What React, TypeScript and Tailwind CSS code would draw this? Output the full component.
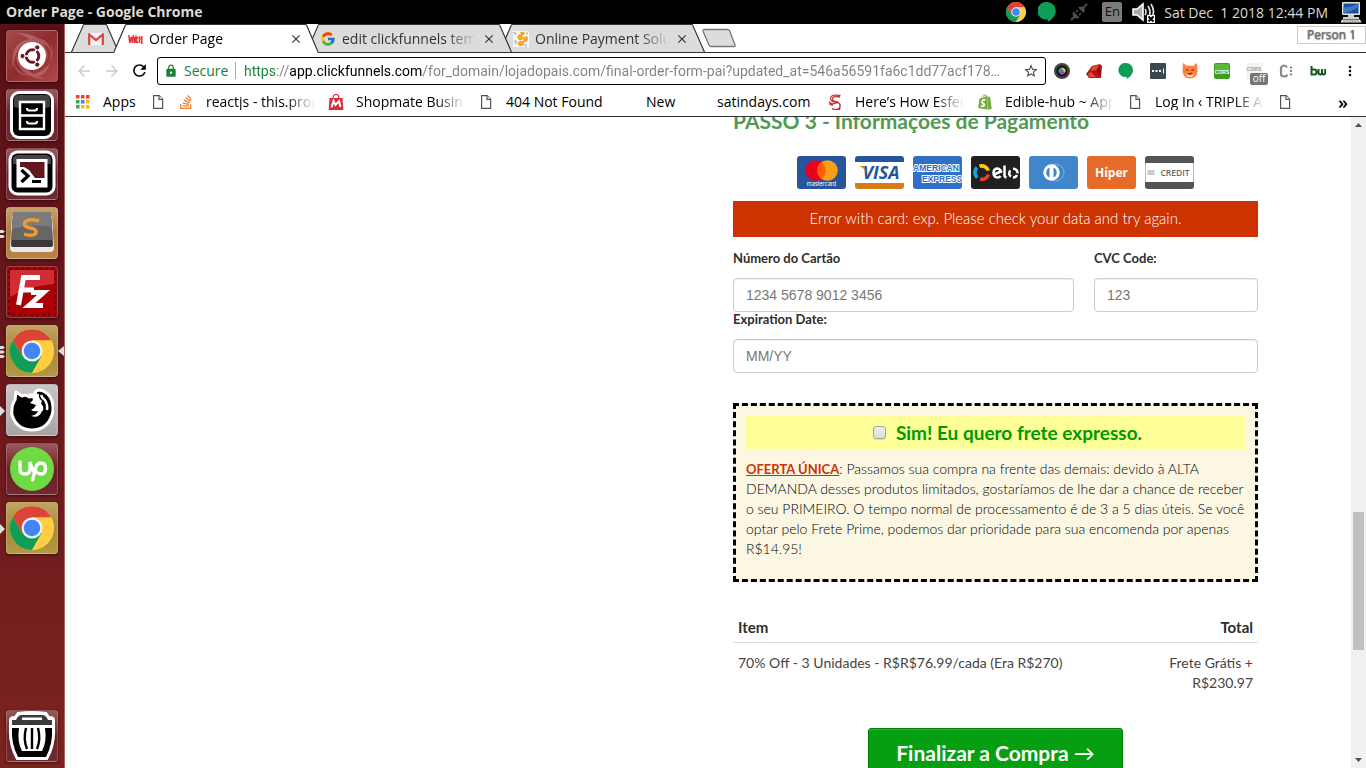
import React from "react";
import { FaStackOverflow, FaShopify } from "react-icons/fa";
import { FcGoogle } from "react-icons/fc";
import {
  MdArrowBack,
  MdArrowForward,
  MdRefresh,
  MdLock,
  MdStarBorder,
  MdMoreVert,
  MdClose,
} from "react-icons/md";

const UI = "font-['Open_Sans','Noto_Sans',sans-serif]";

function ChromeLogo({ className }: { className: string }) {
  return (
    <svg viewBox="0 0 48 48" className={className} aria-hidden="true">
      <circle cx="24" cy="24" r="24" fill="#ffcd40" />
      <path d="M3.2 12A24 24 0 0 0 24 48L34.4 30L24 24L13.6 30Z" fill="#0f9d58" />
      <path d="M3.2 12A24 24 0 0 1 44.8 12.5H24L13.6 30Z" fill="#db4437" />
      <path d="M24 12.5H44.8A24 24 0 0 1 24 48L34.4 30Z" fill="#ffcd40" />
      <circle cx="24" cy="24" r="11.4" fill="#f1f1f1" />
      <circle cx="24" cy="24" r="9" fill="#4285f4" />
    </svg>
  );
}

function Hangouts({ className }: { className: string }) {
  return (
    <svg viewBox="0 0 18 20" className={className} aria-hidden="true">
      <path d="M9 0a8.8 8.8 0 0 1 8.8 8.8c0 5-4 9-8 11.2v-2.6A8.8 8.8 0 1 1 9 0z" fill="#0f9d58" />
    </svg>
  );
}

function Doc() {
  return (
    <svg viewBox="0 0 12 16" className="h-4 w-3" fill="#fff" stroke="#555" strokeWidth="1.2" aria-hidden="true">
      <path d="M1.6 1.6h5.6l3.4 3.6v9.2h-9z" />
      <path d="M7 1.6v3.8h3.6" />
    </svg>
  );
}

/* ---------- system bar ---------- */

function SystemBar() {
  return (
    <header className="flex h-6 shrink-0 items-center bg-black pl-1.5 pr-1 text-[#dfdbd2]">
      <h1 className="text-[14px] leading-6 font-bold">Order Page - Google Chrome</h1>
      <div className="ml-auto flex items-center text-[14px]">
        <ChromeLogo className="mr-3 size-5" />
        <Hangouts className="mr-3.5 h-5 w-[18px]" />
        <svg viewBox="0 0 18 18" className="mr-3.5 size-[18px]" aria-hidden="true">
          <path d="M1 17l4.500-4.500M13 5l4-4" stroke="#4d4d4d" strokeWidth="1.800" />
          <path d="M3.500 8.500l6 6q-3 2-5.500-.5t-.5-5.500zM8 4.500l5.500 5.500q2.500-2.500.5-5T8 4.500z" fill="#4d4d4d" />
          <path d="M6 9l2-2M9 12l2-2" stroke="#4d4d4d" strokeWidth="1.400" />
        </svg>
        <span className="mr-2.5 flex h-5 w-5 items-center justify-center rounded-xs bg-[#7b7b7b] text-[13px] text-[#111]">En</span>
        <svg viewBox="0 0 24 22" className="mr-2 h-[22px] w-6" aria-hidden="true">
          <path d="M1 8h4l6-5v16l-6-5H1z" fill="#aaa" stroke="#fff" strokeWidth="1.6" />
          <path d="M13 8q2 3 0 6M16 5q4 6 0 12M19 3q5 8 0 15" fill="none" stroke="#ddd" strokeWidth="1.7" />
          <path d="M15 14h8v8h-8z" fill="#fff" />
          <path d="M16.500 15.500l5 5M21.500 15.500l-5 5" stroke="#000" strokeWidth="2" />
        </svg>
        <time className="mr-3 text-[14px] whitespace-pre">Sat Dec  1 2018 12:44 PM</time>
        <svg viewBox="0 0 22 22" className="h-[22px] w-[22px]" aria-hidden="true">
          <rect x="2" y="1" width="18" height="13" rx="1" fill="#e8e6df" />
          <rect x="3.500" y="2.500" width="15" height="10" fill="#1b4f9c" />
          <path d="M3.500 12.500V6q7 1 15-3.500v3q-6 5-15 7z" fill="#3c7bc8" />
          <path d="M8 14h6v2H8zM3 16h16v2H3z" fill="#cfcdc6" />
          <path d="M2 18.500h18l1.500 3H.5z" fill="#e4e2da" />
          <path d="M3 20h16" stroke="#999" />
        </svg>
      </div>
    </header>
  );
}

/* ---------- launcher ---------- */

type TileProps = { label: string; tone: string; children: React.ReactNode; left?: "one" | "two" | "three"; active?: boolean };

function Tile({ label, tone, children, left, active }: TileProps) {
  return (
    <button
      type="button"
      aria-label={label}
      className={`relative flex size-[52px] items-center justify-center rounded-[4px] border border-white/20 shadow-[0_1px_3px_rgba(0,0,0,0.5)] ${tone}`}
    >
      {children}
      {left && (
        <svg viewBox="0 0 5 12" className="absolute top-5 -left-[7px] h-3 w-[5px]" fill="#ddd" aria-hidden="true">
          {left === "one" && <path d="M0 1l5 5-5 5z" />}
          {left === "two" && <path d="M0 2h3l2 1.500-2 1.500H0zM0 7h3l2 1.500L3 10H0z" />}
          {left === "three" && <path d="M0 0h3l2 1.500L3 3H0zM0 4.500h3L5 6 3 7.500H0zM0 9h3l2 1.500L3 12H0z" />}
        </svg>
      )}
      {active && (
        <svg viewBox="0 0 6 10" className="absolute top-5 -right-[7px] h-2.5 w-1.5" fill="#ddd" aria-hidden="true">
          <path d="M6 0v10L0 5z" />
        </svg>
      )}
    </button>
  );
}

function Launcher() {
  const maroon = "bg-linear-to-b from-[#96585c] via-[#701f26] to-[#702830]";
  const gold = "bg-linear-to-b from-[#bda565] via-[#a98a35] to-[#b39845]";
  return (
    <nav
      aria-label="Launcher"
      className="flex w-[65px] shrink-0 flex-col items-center gap-[7px] border-r border-[#a86462] bg-linear-to-b from-[#581116] via-[#6b181c] to-[#7b241f] py-1.5 pr-px"
    >
      <Tile label="Search" tone="bg-linear-to-br from-[#a34a4c] via-[#8f2a2e] to-[#b04a48]">
        <svg viewBox="0 0 50 50" className="absolute inset-0 size-full" aria-hidden="true">
          <g fill="#fff" opacity=".2">
            <path d="M6 38Q2 12 22 8T44 22Q40 10 24 11T6 38z" />
            <path d="M44 12Q50 34 30 42T6 30Q10 44 28 45T44 12z" />
            <path d="M10 2Q40 2 41 28Q32 10 10 2z" />
            <path d="M38 48Q10 46 9 24Q18 42 38 48z" />
          </g>
        </svg>
        <svg viewBox="0 0 28 28" className="relative size-7" aria-hidden="true">
          <circle cx="14" cy="14" r="14" fill="#fff" />
          <circle cx="14.500" cy="14" r="6.300" fill="none" stroke="#6a1a20" strokeWidth="3" />
          <path d="M14.500 14L3 14M14.500 14L20.500 4M14.500 14L20.500 24" stroke="#fff" strokeWidth="1.600" />
          <g fill="#6a1a20" stroke="#fff" strokeWidth="1">
            <circle cx="4.500" cy="14" r="2.600" />
            <circle cx="19.300" cy="5.400" r="2.600" />
            <circle cx="19.300" cy="22.600" r="2.600" />
          </g>
          <circle cx="14.500" cy="14" r="4.600" fill="#fff" />
        </svg>
      </Tile>
      <Tile label="Files" tone={maroon}>
        <svg viewBox="0 0 46 50" className="h-[50px] w-[46px]" aria-hidden="true">
          <rect x="1" y="1" width="44" height="48" rx="9" fill="#fff" />
          <rect x="4" y="4" width="38" height="42" rx="6" fill="#000" />
          <path d="M5 9a5 5 0 0 1 5-4h26a5 5 0 0 1 5 4v8q-18 5-36 0z" fill="#444" />
          <path d="M11 12h24v27H11zM11 25.500h24" fill="#000" stroke="#fff" strokeWidth="2.400" />
          <path d="M18 18q0 2.500 2 2.500h6q2 0 2-2.500M18 31q0 2.500 2 2.500h6q2 0 2-2.500" fill="none" stroke="#fff" strokeWidth="2.200" />
        </svg>
      </Tile>
      <Tile label="Terminal" tone={maroon}>
        <svg viewBox="0 0 48 48" className="size-12" aria-hidden="true">
          <rect x=".5" y=".5" width="47" height="45" rx="9" fill="#fff" />
          <rect x="3.500" y="3.500" width="41" height="39" rx="6" fill="#000" />
          <path d="M5 9a5 5 0 0 1 5-4h28a5 5 0 0 1 5 4v5H5z" fill="#444" />
          <rect x="8.500" y="9" width="31" height="28.500" fill="#fff" />
          <path d="M12 12h24.500v16H27l-6-8-5-3h-4z" fill="#64151d" />
          <path d="M13.500 20l6.500 6-6.500 6" fill="none" stroke="#000" strokeWidth="3.200" />
          <path d="M24 31.500h9" stroke="#000" strokeWidth="3" />
        </svg>
      </Tile>
      <Tile label="Sublime Text" tone="bg-linear-to-b from-[#c7a06c] via-[#b07a3c] to-[#b98345]" left="two">
        <svg viewBox="0 0 46 44" className="h-11 w-[46px]" aria-hidden="true">
          <path d="M3 5l-2 32q0 4 4 4h36q4 0 4-4L43 5z" fill="#e9e9e9" />
          <path d="M4 4q0-3 3-3h32q3 0 3 3l2 30q0 2-2 2H4q-2 0-2-2z" fill="#383838" />
          <path d="M4 4q0-3 3-3h32q3 0 3 3l2 25H2z" fill="#666" />
          <path d="M4 4q0-3 3-3h32q3 0 3 3l1 12Q24 12 3 18z" fill="#7c7c7c" />
          <path d="M30 10q-10-3-14 1-2 5 5 6t6 5q-3 4-12 1" fill="none" stroke="#f79a2e" strokeWidth="3.400" />
        </svg>
      </Tile>
      <Tile label="FileZilla" tone="bg-[#8e1116]">
        <svg viewBox="0 0 50 50" className="size-[50px]" aria-hidden="true">
          <rect x="2" y="2" width="46" height="46" fill="#ad0005" stroke="#7d0004" strokeWidth="2.500" strokeDasharray="3 3" />
          <path d="M3 3h44v14Q25 18 3 30z" fill="#cf2d33" />
          <path d="M11.500 38L16.500 10.500H33M14 23h13M24 25.500h12.500L22 38.500h14" fill="none" stroke="#fff" strokeWidth="5" />
        </svg>
      </Tile>
      <Tile label="Google Chrome" tone={gold} left="three" active>
        <ChromeLogo className="size-11" />
      </Tile>
      <Tile label="Firefox" tone="bg-linear-to-b from-[#c9c4c5] to-[#aaa3a4]" left="one">
        <svg viewBox="0 0 44 44" className="size-11" aria-hidden="true">
          <path
            d="M5 12L6 4l6 4q4-2 7 1 4 0 6-3 0-4 5-4 9 2 12 11 2 8 0 14-5 15-20 15T2 27Q1 18 5 12z"
            fill="#000"
            stroke="#fff"
            strokeWidth="3"
            strokeLinejoin="round"
          />
          <path
            d="M17 6q5 1 6 6l-3 3 6 2q-1 3-5 5 3 2 7 1-1 4-7 5 8 3 11-5 2 0 1-5-3-2-1-5-4-3-3-7l-5-1z"
            fill="#fff"
          />
          <path d="M31 7q1 3 4 5 3 5 2 10" fill="none" stroke="#fff" strokeWidth="2.400" />
        </svg>
      </Tile>
      <Tile label="Upwork" tone={maroon}>
        <svg viewBox="0 0 44 44" className="size-11" fill="none" aria-hidden="true">
          <circle cx="22" cy="22" r="22" fill="#6fda44" />
          <path d="M10 15v7q0 5 5 5t5-5v-7q2 8 5 11" stroke="#fff" strokeWidth="3.300" strokeLinecap="round" />
          <path d="M22.500 33l3-11q1-6 5.500-6 4.500 0 4.500 5.500T31 27q-4 0-7-5" stroke="#fff" strokeWidth="3.300" strokeLinecap="round" />
        </svg>
      </Tile>
      <Tile label="Google Chrome profile" tone={gold} left="one">
        <ChromeLogo className="size-11" />
      </Tile>
      <div className="mt-auto">
        <Tile label="Trash" tone={maroon}>
          <svg viewBox="0 0 48 50" className="h-[50px] w-12" aria-hidden="true">
            <path d="M2 9q0-3 5-3l3-4q14-2 28 0l3 4q5 0 5 3v8q1 17-7 31H9Q1 34 2 17z" fill="#fff" stroke="#fff" strokeWidth="2" />
            <path d="M4 9h4q2-5 6-5h20q4 0 6 5h4v5H4z" fill="#3b3b3b" />
            <path d="M14 6.500h20v2.500H14z" fill="#fff" />
            <path d="M4 17h7q-2 14 3 23h20q5-9 3-23h7q1 16-6 29H10Q3 33 4 17z" fill="#000" />
            <path d="M18 17q-3 11 1 21M24 17v21M30 17q3 11-1 21" fill="none" stroke="#000" strokeWidth="2.400" />
          </svg>
        </Tile>
      </div>
    </nav>
  );
}

/* ---------- tabs ---------- */

function TabEdge({ side, fill }: { side: "left" | "right"; fill: string }) {
  return (
    <svg viewBox="0 0 13 29" preserveAspectRatio="none" className="h-full w-[13px] shrink-0" aria-hidden="true">
      {side === "left" ? (
        <>
          <path d="M0 29L13 .5V29z" fill={fill} />
          <path d="M.5 29L12 2q.4-1.500 1.500-1.500" fill="none" stroke="#2e3436" strokeWidth="1.200" />
        </>
      ) : (
        <>
          <path d="M13 29L0 .5V29z" fill={fill} />
          <path d="M12.500 29L1 2Q.6.500-.5.500" fill="none" stroke="#2e3436" strokeWidth="1.200" />
        </>
      )}
    </svg>
  );
}

function Tab({
  icon,
  title,
  active,
  place,
}: {
  icon: React.ReactNode;
  title?: string;
  active?: boolean;
  place: string;
}) {
  const fill = active ? "#ffffff" : "#dcdcdc";
  return (
    <div role="tab" aria-selected={!!active} aria-label={title ?? "Gmail"} className={`relative flex shrink-0 ${place}`}>
      <TabEdge side="left" fill={fill} />
      <div
        className={`flex min-w-0 grow items-center border-t border-[#2e3436] ${active ? "bg-white" : "bg-[#dcdcdc]"}`}
      >
        {icon}
        {title && (
          <>
            <span
              className={`ml-1.5 w-[140px] shrink-0 overflow-hidden text-[14px] leading-5 whitespace-nowrap [mask-image:linear-gradient(90deg,#000_105px,transparent_134px)] ${
                active ? "text-black" : "text-[#333]"
              }`}
            >
              {title}
            </span>
            <button type="button" aria-label={`Close ${title}`} className="shrink-0 text-[#333]">
              <MdClose className="size-3.5" />
            </button>
          </>
        )}
      </div>
      <TabEdge side="right" fill={fill} />
    </div>
  );
}

function TabStrip() {
  return (
    <div className="flex h-[29px] shrink-0 border-b border-[#2e3436] bg-white pl-1.5">
      <div role="tablist" className="flex">
        <Tab
          place="z-10 h-7 w-12"
          icon={
            <svg viewBox="0 0 16 12" className="ml-1 h-3 w-4" aria-hidden="true">
              <path d="M1 0h14v12H1z" fill="#f2f2f2" />
              <path d="M1.200 12V1.500L8 7l6.800-5.500V12" fill="none" stroke="#d6453a" strokeWidth="2.200" />
            </svg>
          }
        />
        <Tab
          active
          place="z-30 -ml-1.5 -mb-px h-[29px] w-[206px]"
          title="Order Page"
          icon={
            <svg viewBox="0 0 15 11" className="ml-0.5 h-[11px] w-[15px] shrink-0" fill="none" stroke="#f0303c" strokeWidth="1.500" aria-hidden="true">
              <path d="M.8 1l1 8 1.500-6 1.200 6 .8-8M6.500 3v6M8 1.500V9M8 6l2-3M8 6l2 3M11.500 2v7M13.800 2v8M11 4.500h3.500" />
            </svg>
          }
        />
        <Tab place="z-20 -ml-[13px] h-7 w-[206px]" title="edit clickfunnels template" icon={<FcGoogle className="ml-px size-4 shrink-0" />} />
        <Tab
          place="z-10 -ml-[13px] h-7 w-[206px]"
          title="Online Payment Solutions"
          icon={
            <svg viewBox="0 0 16 16" className="ml-px size-4 shrink-0" aria-hidden="true">
              <path d="M0 0h16v16H0z" fill="#f6f6f2" />
              <path d="M7 1q4-1 5 1-1 3-4 2zM5 4q4-2 5 2 0 4-4 3-3-3-1-5zM11 6q4-2 4 1 0 5-4 4-2-3 0-5zM5 11q4-2 6 0 1 4-3 4-4 0-3-4z" fill="#f5a623" />
              <path d="M0 1l4 1-2 2zM11 14l3-1-1 3zM1 9l3 1-1 4zM13 1l2 1-1 2z" fill="#8fb6dd" />
            </svg>
          }
        />
      </div>
      <button type="button" aria-label="New tab" className="-ml-1 self-center">
        <svg viewBox="0 0 36 20" className="h-5 w-9" aria-hidden="true">
          <path d="M3.500 1.500h23q1.500 0 2 1.200l5.500 14q.6 1.800-1.200 1.800H10q-1.500 0-2-1.200L2 3.200Q1.500 1.500 3.500 1.500z" fill="#dcdcdc" stroke="#777" strokeWidth="1.300" />
        </svg>
      </button>
      <button
        type="button"
        className="mt-0.5 ml-auto h-[18px] w-[69px] border border-[#ccc] text-[12px] leading-4 text-[#777] [text-shadow:0_0_1px_#555,0_1px_1px_#999]"
      >
        Person 1
      </button>
    </div>
  );
}

/* ---------- toolbar ---------- */

function Toolbar() {
  return (
    <div className="flex h-[35px] shrink-0 items-center bg-white pl-2.5">
      <button type="button" aria-label="Back" className="flex w-7 text-[#ccc]">
        <MdArrowBack className="size-[18px]" />
      </button>
      <button type="button" aria-label="Forward" className="flex w-[27px] text-[#ccc]">
        <MdArrowForward className="size-[18px]" />
      </button>
      <button type="button" aria-label="Reload" className="mr-2 flex text-black">
        <MdRefresh className="size-[19px]" />
      </button>
      <form className="flex h-7 min-w-0 grow items-center rounded-[3px] border border-black px-1.5" onSubmit={(e) => e.preventDefault()}>
        <MdLock className="mr-1.5 size-3.5 shrink-0 text-[#188038]" />
        <label htmlFor="url" className="w-[52px] shrink-0 border-r border-[#aaa] text-[14px] leading-[17px] text-[#188038]">
          Secure
        </label>
        <input
          id="url"
          className="mr-1.5 ml-2 min-w-0 grow overflow-hidden bg-[linear-gradient(90deg,#188038_0_32px,#808080_32px_46px,#000_46px_178px,#808080_178px)] bg-clip-text font-[Roboto,'Open_Sans',sans-serif] text-[14px] leading-5 text-transparent outline-none"
          defaultValue="https://app.clickfunnels.com/for_domain/lojadopais.com/final-order-form-pai?updated_at=546a56591fa6c1dd77acf178…"
        />
        <button type="button" aria-label="Bookmark this page" className="shrink-0 text-[#444]">
          <MdStarBorder className="size-4" />
        </button>
      </form>
      <div className="flex shrink-0 items-center gap-4 pr-2 pl-2">
        <svg viewBox="0 0 16 16" className="size-4" aria-hidden="true">
          <circle cx="8" cy="8" r="8" fill="#444" />
          <circle cx="8" cy="8" r="5.500" fill="#111" />
          <path d="M8 8V4.500A3.500 3.500 0 0 1 11 10z" fill="#e8c520" />
          <path d="M8 8V4.500A3.500 3.500 0 0 0 5 10z" fill="#2fae5a" />
          <path d="M8 8l3 2a3.500 3.500 0 0 1-6 0z" fill="#b23bd0" />
          <circle cx="8" cy="8" r="1.500" fill="#2b7de0" />
        </svg>
        <svg viewBox="0 0 16 16" className="size-4" aria-hidden="true">
          <path d="M0 11L6 3l8-2 2 2-1 12H3z" fill="#b81414" />
          <path d="M6 4l7-2-3 5-5 1zM2 11l3-2 5 5-7 0z" fill="#e04a3c" />
          <path d="M14 3l1 10-5-5z" fill="#8d0b0b" />
        </svg>
        <Hangouts className="h-4 w-4" />
        <svg viewBox="0 0 16 16" className="size-4" aria-hidden="true">
          <rect width="16" height="16" rx="1" fill="#3c4850" />
          <path d="M2 7h2v2H2zM5.500 7h2v2h-2zM9 7h2v2H9zM13 5.500h1v5h-1z" fill="#fff" />
        </svg>
        <svg viewBox="0 0 16 16" className="size-4" aria-hidden="true">
          <path d="M1 0l4 3q3-1 6 0l4-3 .5 9Q14 15.500 8 15.500T.5 9z" fill="#ff7f3f" />
          <path d="M4 11q4 3 8 0-1 3-4 3t-4-3z" fill="#fff" />
          <path d="M4 6.500l2.500 1M12 6.500l-2.500 1M6 10l2 1 2-1" stroke="#7a3310" strokeWidth="1.200" fill="none" />
        </svg>
        <svg viewBox="0 0 16 16" className="size-4" aria-hidden="true">
          <rect width="16" height="16" rx="2" fill="#3f9b1f" />
          <rect x="1" y="1" width="14" height="7" fill="#5cb83c" />
          <text x="8" y="10.500" textAnchor="middle" fontFamily="Liberation Sans" fontSize="5" fontWeight="700" fill="#fff">
            CORS
          </text>
        </svg>
        <span className="relative block h-4 w-4">
          <svg viewBox="0 0 16 16" className="size-4" aria-hidden="true">
            <rect width="16" height="16" fill="#f4f4f4" />
            <text x="8" y="8" textAnchor="middle" fontFamily="Liberation Sans" fontSize="5" fontWeight="700" fill="#999">
              CORS
            </text>
          </svg>
          <span className="absolute top-2.5 left-1 h-3 w-[18px] rounded-xs bg-[#757575] text-center text-[10px] leading-[11px] text-white">off</span>
        </span>
        <svg viewBox="0 0 16 16" className="size-4" fill="none" stroke="#888" strokeWidth="2.200" aria-hidden="true">
          <path d="M9 4.500Q8 2.500 6 2.500T3 5v6q0 2.500 3 2.500t3-2" />
          <path d="M13 3.500v2M13 7v2M13 10.500v2" />
        </svg>
        <svg viewBox="0 0 16 16" className="size-4" fill="none" stroke="#14591b" strokeWidth="2" aria-hidden="true">
          <path d="M1.500 3v8.500h3q2 0 2-2.500t-2-2.500h-3M8.500 6v3.500q0 2 1.700 2t1.800-2V6v3.500q0 2 1.700 2t1.500-2V6" />
        </svg>
        <button type="button" aria-label="Menu" className="text-[#111]">
          <MdMoreVert className="size-4" />
        </button>
      </div>
    </div>
  );
}

/* ---------- bookmarks ---------- */

function Bookmark({ icon, label, width }: { icon?: React.ReactNode; label?: string; width: string }) {
  return (
    <a href="#" aria-label={label ?? "Bookmark"} className={`flex h-full shrink-0 items-center ${width}`}>
      <span className="flex w-4 shrink-0 justify-center">{icon}</span>
      {label && (
        <span className="ml-3 w-[109px] shrink-0 overflow-hidden whitespace-nowrap [mask-image:linear-gradient(90deg,#000_80px,transparent_109px)]">
          {label}
        </span>
      )}
    </a>
  );
}

function BookmarkPlain({ icon, label, width }: { icon?: React.ReactNode; label: string; width: string }) {
  return (
    <a href="#" className={`flex h-full shrink-0 items-center ${width}`}>
      <span className="flex w-4 shrink-0 justify-center">{icon}</span>
      <span className="ml-3 whitespace-nowrap">{label}</span>
    </a>
  );
}

function Bookmarks() {
  const colors = ["#ea4335", "#ea4335", "#ea4335", "#34a853", "#4285f4", "#fbbc05", "#34a853", "#fbbc05", "#fbbc05"];
  return (
    <div className="flex h-[29px] shrink-0 items-center border-b border-[#2e3436] bg-white pl-2.5 text-[14px] leading-4 text-black">
      <BookmarkPlain
        width="w-[75px]"
        label="Apps"
        icon={
          <svg viewBox="0 0 14 14" className="size-3.5" aria-hidden="true">
            {colors.map((c, i) => (
              <rect key={i} x={(i % 3) * 5} y={Math.floor(i / 3) * 5} width="3.500" height="3.500" fill={c} />
            ))}
          </svg>
        }
      />
      <Bookmark width="w-7" icon={<Doc />} />
      <Bookmark width="w-[150px]" label="reactjs - this.props" icon={<FaStackOverflow className="size-4 text-[#f08030]" />} />
      <Bookmark
        width="w-[150px]"
        label="Shopmate Business"
        icon={
          <svg viewBox="0 0 16 16" className="size-4" aria-hidden="true">
            <path d="M5 5q0-4.500 3-4.500T11 5" fill="none" stroke="#e02b35" strokeWidth="1.200" />
            <path d="M1.500 4h13l.8 12H.7z" fill="#e02b35" />
            <path d="M3.500 13.500L5.500 7l2 4 3.500-4 1.500 6" fill="none" stroke="#fff" strokeWidth="2" />
          </svg>
        }
      />
      <BookmarkPlain width="w-[140px]" label="404 Not Found" icon={<Doc />} />
      <BookmarkPlain width="w-[71px]" label="New" />
      <BookmarkPlain width="w-[138px]" label="satindays.com" />
      <Bookmark
        width="w-[150px]"
        label="Here’s How Esfera"
        icon={
          <svg viewBox="0 0 16 16" className="size-4" fill="none" stroke="#c4393c" strokeWidth="1.300" aria-hidden="true">
            <path d="M13.500 1.500Q4 0 3.500 4t7 4.500q4 1.500 2 5T5 14.500M13 3Q6 1.500 5.500 4.500T11 8M2 8q3 3 7 1t4 4-8 1.500M3 9q-1 2 3 2" />
          </svg>
        }
      />
      <Bookmark width="w-[150px]" label="Edible-hub ~ Apps" icon={<FaShopify className="size-4 text-[#7aad3f]" />} />
      <Bookmark width="w-[150px]" label="Log In ‹ TRIPLE A B" icon={<Doc />} />
      <Bookmark width="w-7" icon={<Doc />} />
      <button type="button" aria-label="More bookmarks" className="mr-[18px] ml-auto text-[18px] leading-4 font-semibold">
        »
      </button>
    </div>
  );
}

/* ---------- order form ---------- */

function PaymentCards() {
  const box = "h-[33px] w-[49px]";
  return (
    <div className="mt-6 flex justify-center gap-[9px]">
      <svg viewBox="0 0 49 33" className={box} role="img" aria-label="Mastercard">
        <rect width="49" height="33" rx="3" fill="#26559b" />
        <circle cx="18.500" cy="14.500" r="10.300" fill="#eb001b" />
        <circle cx="30.500" cy="14.500" r="10.300" fill="#f79e1b" />
        <path d="M24.500 6.200a10.300 10.300 0 0 1 0 16.600 10.300 10.300 0 0 1 0-16.600z" fill="#ff5f00" />
        <text x="24.500" y="29.500" textAnchor="middle" fontFamily="Inter" fontSize="5.500" fill="#fff">
          mastercard
        </text>
      </svg>
      <svg viewBox="0 0 49 33" className={box} role="img" aria-label="Visa">
        <path d="M0 6V3a3 3 0 0 1 3-3h43a3 3 0 0 1 3 3v3z" fill="#26559b" />
        <path d="M0 27v3a3 3 0 0 0 3 3h43a3 3 0 0 0 3-3v-3z" fill="#d97b16" />
        <text x="26" y="23" textAnchor="middle" fontFamily="Open Sans" fontSize="18" fontStyle="italic" fontWeight="700" fill="#26559b">
          VISA
        </text>
        <path d="M4 10h5l3 8q-2-6-8-8z" fill="#d97b16" />
      </svg>
      <svg viewBox="0 0 49 33" className={box} role="img" aria-label="American Express">
        <rect width="49" height="33" rx="3" fill="#306fc5" />
        <g fontFamily="Liberation Sans" fontSize="8.500" fontWeight="700" fill="#306fc5" stroke="#fff" strokeWidth="1.800" paintOrder="stroke">
          <text x="0" y="15">AMERICAN</text>
          <text x="9" y="25.500">EXPRESS</text>
        </g>
      </svg>
      <svg viewBox="0 0 49 33" className={box} role="img" aria-label="Elo">
        <rect width="49" height="33" rx="3" fill="#221f20" />
        <g fill="none" strokeWidth="3.600">
          <path d="M8.500 10.300a6.800 6.800 0 0 1 8.800 4.200" stroke="#fecb05" />
          <path d="M6.300 21.600a6.800 6.800 0 0 1-.4-10" stroke="#15a4de" />
          <path d="M17.500 18.500a6.800 6.800 0 0 1-8.300 4.600" stroke="#ee4023" />
        </g>
        <g fill="none" stroke="#fff" strokeWidth="2.500">
          <path d="M23 18.500l7-3q-1-3-4-3-3.500.5-3.500 4.500t4 4.500q2 0 3-1.500M33.500 9.500v10q0 1.500 2 2" />
          <path d="M39.500 14.500a3.700 3.700 0 0 0 .5 6M42 12.800a4 4 0 0 1 4.500 4.500M42 21.500a4 4 0 0 0 4-2.500" />
        </g>
      </svg>
      <svg viewBox="0 0 49 33" className={box} role="img" aria-label="Diners Club">
        <rect width="49" height="33" rx="3" fill="#4186cd" />
        <circle cx="26.500" cy="16.500" r="8.500" fill="none" stroke="#8db8e4" strokeWidth=".8" />
        <circle cx="22.500" cy="16.500" r="8.200" fill="#fff" />
        <path d="M20.500 11.500a5.500 5.500 0 0 0 0 10zM24.500 11.500a5.500 5.500 0 0 1 0 10z" fill="#4186cd" />
      </svg>
      <svg viewBox="0 0 49 33" className={box} role="img" aria-label="Hiper">
        <rect width="49" height="33" rx="3" fill="#e66b29" />
        <text x="24.500" y="21" textAnchor="middle" fontFamily="Open Sans" fontSize="12" fontWeight="700" fill="#fff">
          Hiper
        </text>
        <circle cx="19.800" cy="11.800" r="1.200" fill="#ffd54a" />
      </svg>
      <svg viewBox="0 0 49 33" className={box} role="img" aria-label="Credit">
        <rect x=".5" y=".5" width="48" height="32" rx="3" fill="#fff" stroke="#bbb" />
        <path d="M0 7V3a3 3 0 0 1 3-3h43a3 3 0 0 1 3 3v4zM0 26v4a3 3 0 0 0 3 3h43a3 3 0 0 0 3-3v-4z" fill="#545454" />
        <rect x="2.500" y="14" width="7" height="5" fill="#ccc" />
        <text x="30" y="19.500" textAnchor="middle" fontFamily="Open Sans" fontSize="8.500" fontWeight="600" fill="#666">
          CREDIT
        </text>
      </svg>
    </div>
  );
}

function Field({ id, label, placeholder, grow }: { id: string; label: string; placeholder: string; grow: string }) {
  return (
    <div className={`flex min-w-0 flex-col ${grow}`}>
      <label htmlFor={id} className="mb-3 text-[13px] leading-[15px] font-bold">
        {label}
      </label>
      <input
        id={id}
        placeholder={placeholder}
        className="h-[34px] w-full rounded-[4px] border border-[#ccc] bg-white px-3 font-['Liberation_Sans',sans-serif] text-[14px] shadow-[inset_0_1px_1px_rgba(0,0,0,0.075)] placeholder:text-[#777]"
      />
    </div>
  );
}

function OrderForm() {
  return (
    <form
      className="mr-[93px] ml-auto w-[525px] font-[Lato,'Open_Sans',sans-serif] text-[#2d2d2d]"
      onSubmit={(e) => e.preventDefault()}
    >
      <h2 className="-mt-2 text-[21px] leading-[23px] font-bold text-[#529a52]">PASSO 3 - Informações de Pagamento</h2>
      <PaymentCards />
      <p role="alert" className="mt-3 bg-[#cc3300] pt-[7px] pb-[9px] text-center text-[15px] leading-5 font-light text-white">
        Error with card: exp. Please check your data and try again.
      </p>
      <div className="mt-3.5 flex gap-5">
        <Field id="number" label="Número do Cartão" placeholder="1234 5678 9012 3456" grow="grow" />
        <Field id="cvc" label="CVC Code:" placeholder="123" grow="w-[164px] shrink-0" />
      </div>
      <Field id="expiry" label="Expiration Date:" placeholder="MM/YY" grow="w-full" />

      <section className="mt-[30px] border-[3px] border-dashed border-black bg-[#fcf7e3] px-2.5 pt-2.5 pb-5">
        <label className="flex h-[33px] items-center justify-center gap-2.5 bg-[#ffff99] pl-6 text-[19px] leading-6 font-bold text-[#009900]">
          <input
            type="checkbox"
            className="size-[13px] appearance-none rounded-[3px] border border-[#a6a6a6] bg-linear-to-b from-[#ededed] to-[#dcdcdc] shadow-[0_1px_1px_rgba(0,0,0,0.12)]"
          />
          Sim! Eu quero frete expresso.
        </label>
        <p className="mt-2.5 text-[14px] leading-5 font-light whitespace-nowrap text-black">
          <span className="text-[13px] font-bold text-[#cc3300] underline">OFERTA ÚNICA</span>: Passamos sua compra na frente das demais: devido à ALTA
          <br />
          DEMANDA desses produtos limitados, gostaríamos de lhe dar a chance de receber
          <br />o seu PRIMEIRO. O tempo normal de processamento é de 3 a 5 dias úteis. Se você
          <br />
          optar pelo Frete Prime, podemos dar prioridade para sua encomenda por apenas
          <br />
          R$14.95!
        </p>
      </section>

      <table className="mt-[30px] w-full text-[15px] leading-5">
        <thead>
          <tr className="border-b border-[#ddd]">
            <th className="px-[5px] pt-[5px] pb-[5px] text-left font-bold">Item</th>
            <th className="px-[5px] pt-[5px] pb-[5px] text-right font-bold">Total</th>
          </tr>
        </thead>
        <tbody>
          <tr className="align-top text-[14px] text-[#444]">
            <td className="px-[5px] py-2.5">70% Off - 3 Unidades - R$R$76.99/cada (Era R$270)</td>
            <td className="w-[100px] px-[5px] py-2.5 text-right">Frete Grátis + R$230.97</td>
          </tr>
        </tbody>
      </table>

      <div className="mt-[25px] flex justify-center">
        <button
          type="submit"
          className="h-[50px] w-[255px] rounded-[3px] border border-[#007a08] bg-[#069f12] text-[21px] leading-6 font-bold text-white shadow-[inset_0_1px_0_rgba(255,255,255,0.2)]"
        >
          Finalizar a Compra <span className="font-normal">→</span>
        </button>
      </div>
    </form>
  );
}

function ScrollTrack() {
  return (
    <div className="flex w-[15px] shrink-0 flex-col items-center bg-[#f1f1f1] py-1.5" aria-hidden="true">
      <svg viewBox="0 0 7 4" className="h-1 w-[7px]" fill="#505050">
        <path d="M3.500 0L7 4H0z" />
      </svg>
      <div className="grow-[385]" />
      <div className="w-[11px] grow-[138] bg-[#c1c1c1]" />
      <div className="grow-[108]" />
      <svg viewBox="0 0 7 4" className="h-1 w-[7px]" fill="#505050">
        <path d="M0 0h7L3.500 4z" />
      </svg>
    </div>
  );
}

export default function App() {
  return (
    <div className={`flex h-screen flex-col overflow-hidden bg-white ${UI}`}>
      <SystemBar />
      <div className="flex min-h-0 grow">
        <Launcher />
        <div className="flex min-w-0 grow flex-col">
          <TabStrip />
          <Toolbar />
          <Bookmarks />
          <div className="flex min-h-0 grow">
            <main className="min-w-0 grow overflow-hidden">
              <OrderForm />
            </main>
            <ScrollTrack />
          </div>
        </div>
      </div>
    </div>
  );
}
